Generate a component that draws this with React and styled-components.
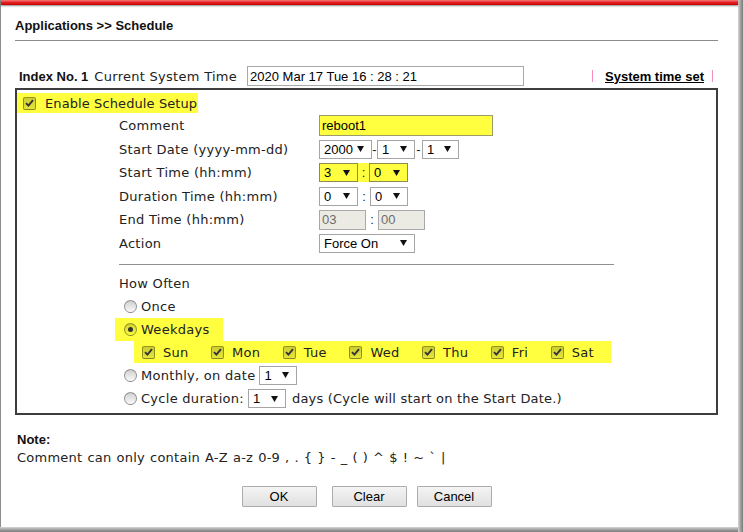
import React from 'react';
import styled, { createGlobalStyle } from 'styled-components';

const ARIAL = `"Liberation Sans", Arial, sans-serif`;
const VERDANA = `"DejaVu Sans", Verdana, sans-serif`;
const YELLOW = '#ffff40';
const VSPACE = '0.28px';

const GlobalStyle = createGlobalStyle`
  html, body { margin: 0; padding: 0; background: #fff; }
  body { font-family: ${VERDANA}; font-size: 13px; color: #222; }
  * { box-sizing: border-box; }
`;

const Window = styled.div`
  width: 743px;
  height: 532px;
  display: flex;
  padding: 0 5px 5px 0;
  background:
    linear-gradient(to right, #d8d8d8, #a2a2a2 50%, #7a7a7a) right top / 5px 100% no-repeat,
    linear-gradient(to bottom, #d8d8d8, #a2a2a2 50%, #7a7a7a) left bottom / 100% 5px no-repeat,
    #fff;
`;

const Panel = styled.div`
  flex: 1;
  display: flex;
  flex-direction: column;
  background: #fff;
  border-left: 1px solid #8c8c8c;
`;

const RedBar = styled.div`
  height: 5px;
  flex-shrink: 0;
  background: linear-gradient(#f47c7c, #e82424 45%, #c40000);
  box-shadow: 0 1px 2px rgba(0, 0, 0, 0.45);
`;

const Content = styled.div`
  display: flex;
  flex-direction: column;
  padding: 13px 20px 0 14px;
`;

const Title = styled.div`
  font-family: ${ARIAL};
  font-weight: bold;
  font-size: 13px;
  line-height: 15px;
  color: #111;
`;

const Rule = styled.div`
  margin-top: 7px;
  border-top: 1px solid #8c8c8c;
`;

const IndexRow = styled.div`
  margin-top: 25px;
  height: 20px;
  display: flex;
  align-items: center;
  padding: 0 5px 0 4px;
`;

const Bold = styled.span`
  font-family: ${ARIAL};
  font-weight: bold;
  font-size: 13px;
  color: #111;
`;

const PlainText = styled.span`
  font-family: ${VERDANA};
  font-size: 13px;
  letter-spacing: ${p => p.$ls || VSPACE};
  color: #222;
  white-space: nowrap;
  margin-left: ${p => p.$ml || 0}px;
`;

const TextBox = styled.input`
  font-family: ${ARIAL};
  font-size: 13px;
  color: ${p => (p.disabled ? '#6d6d6d' : '#000')};
  width: ${p => p.$w}px;
  height: ${p => p.$h || 20}px;
  margin: 0 0 0 ${p => p.$ml || 0}px;
  padding: 0 2px;
  border: 1px solid ${p => (p.$yellow ? '#9c9c6a' : '#a9a9a9')};
  background: ${p => (p.$yellow ? YELLOW : p.disabled ? '#ebebe4' : '#fff')};
  outline: none;
`;

const LinkGroup = styled.div`
  margin-left: auto;
  display: flex;
  align-items: center;
`;

const Pipe = styled.span`
  width: 1px;
  height: 12px;
  background: #f78fc0;
  margin: 0 ${p => p.$mr || 0}px 0 ${p => p.$ml || 0}px;
`;

const SysLink = styled.a`
  font-family: ${ARIAL};
  font-weight: bold;
  font-size: 13px;
  color: #000;
  text-decoration: underline;
`;

const MainBox = styled.div`
  margin-top: 2px;
  border: 2px solid #3d3d3d;
  padding: 3px 0 2px 0;
  display: flex;
  flex-direction: column;
`;

const EnableBar = styled.div`
  align-self: flex-start;
  display: flex;
  align-items: center;
  height: 20px;
  padding: 0 1px 0 6px;
  background: ${YELLOW};
`;

const CheckBox = styled.span`
  display: inline-flex;
  align-items: center;
  justify-content: center;
  width: 13px;
  height: 13px;
  flex-shrink: 0;
  border: 1px solid rgba(70, 70, 0, 0.5);
  border-radius: 2px;
  background: linear-gradient(rgba(0, 0, 0, 0.2), rgba(0, 0, 0, 0.1));
  margin-right: ${p => p.$mr || 8}px;
`;

const Check = ({ mr }) => (
  <CheckBox $mr={mr}>
    <svg width="9" height="8" viewBox="0 0 9 8">
      <path d="M1 4.2 L3.4 6.6 L8 1.2" stroke="#333" strokeWidth="1.9" fill="none" />
    </svg>
  </CheckBox>
);

const FormGrid = styled.div`
  margin-top: 0.7px;
  padding-left: 102px;
  display: grid;
  grid-template-columns: 200px auto;
  grid-auto-rows: 23.6px;
  align-items: center;
`;

const Label = styled.span`
  font-family: ${VERDANA};
  font-size: 13px;
  letter-spacing: ${p => p.$ls || VSPACE};
  color: #222;
  white-space: nowrap;
`;

const Controls = styled.div`
  display: flex;
  align-items: center;
`;

const SelectBox = styled.span`
  display: inline-flex;
  align-items: center;
  justify-content: space-between;
  width: ${p => p.$w}px;
  height: 19px;
  margin-left: ${p => p.$ml || 0}px;
  padding: 0 7px 0 4px;
  border: 1px solid ${p => (p.$onYellow ? '#8c8c50' : '#a5a5a5')};
  background: ${p => (p.$onYellow ? 'transparent' : '#fff')};
  font-family: ${ARIAL};
  font-size: 13px;
  color: #000;
  flex-shrink: 0;
`;

const Select = ({ value, w, ml, onYellow }) => (
  <SelectBox $w={w} $ml={ml} $onYellow={onYellow}>
    <span>{value}</span>
    <svg width="7" height="6" viewBox="0 0 7 6">
      <polygon points="0,0 7,0 3.5,6" fill="#111" />
    </svg>
  </SelectBox>
);

const Sep = styled.span`
  font-family: ${ARIAL};
  font-size: 13px;
  color: #222;
  width: ${p => p.$w}px;
  text-align: center;
  flex-shrink: 0;
`;

const TimeHighlight = styled.div`
  display: flex;
  align-items: center;
  background: ${YELLOW};
`;

const Divider = styled.div`
  margin: 8.7px 0 0 102px;
  width: 495px;
  border-top: 1px solid #8f8f8f;
`;

const Often = styled.div`
  margin-top: 7px;
  padding-left: 102px;
  display: flex;
  flex-direction: column;
`;

const OftenRow = styled.div`
  height: ${p => p.$h || 23}px;
  display: flex;
  align-items: center;
`;

const RadioDot = styled.span`
  width: 13px;
  height: 13px;
  flex-shrink: 0;
  border-radius: 50%;
  border: 1px solid rgba(0, 0, 0, 0.38);
  background: linear-gradient(rgba(0, 0, 0, 0.18), rgba(0, 0, 0, 0.02));
  display: inline-flex;
  align-items: center;
  justify-content: center;
  margin: 0 4px 0 5px;
  &::after {
    content: '';
    width: 5px;
    height: 5px;
    border-radius: 50%;
    background: #333;
    display: ${p => (p.$on ? 'block' : 'none')};
  }
`;

const WeekdaysBar = styled.div`
  height: 23px;
  width: 108px;
  margin-left: -4px;
  padding-left: 4px;
  display: flex;
  align-items: center;
  background: ${YELLOW};
`;

const DaysBar = styled.div`
  height: 22px;
  width: 477px;
  margin-left: 15px;
  padding-left: 8px;
  display: flex;
  align-items: center;
  background: ${YELLOW};
`;

const Day = styled.span`
  display: inline-flex;
  align-items: center;
  margin-right: 22.5px;
  font-family: ${VERDANA};
  font-size: 13px;
  letter-spacing: ${VSPACE};
  color: #222;
`;

const NoteTitle = styled.div`
  margin-top: 17px;
  padding-left: 2px;
  font-family: ${ARIAL};
  font-weight: bold;
  font-size: 13px;
  line-height: 16px;
  color: #111;
`;

const NoteText = styled.div`
  padding-left: 2px;
  font-family: ${VERDANA};
  font-size: 13px;
  line-height: 19px;
  letter-spacing: 0.25px;
  word-spacing: 0.6px;
  color: #222;
`;

const ButtonRow = styled.div`
  margin-top: 19px;
  display: flex;
  justify-content: center;
`;

const Button = styled.button`
  width: 75px;
  height: 21px;
  margin: 0 ${p => p.$mr || 0}px 0 0;
  padding: 0;
  border: 1px solid #acacac;
  border-radius: 1px;
  background: linear-gradient(#f4f4f4, #e0e0e0);
  font-family: ${ARIAL};
  font-size: 13px;
  color: #000;
`;

const days = ['Sun', 'Mon', 'Tue', 'Wed', 'Thu', 'Fri', 'Sat'];

export default function App() {
  return (
    <>
      <GlobalStyle />
      <Window>
        <Panel>
          <RedBar />
          <Content>
            <Title>Applications &gt;&gt; Schedule</Title>
            <Rule />
            <IndexRow>
              <Bold>Index No. 1</Bold>
              <PlainText $ml={6}>Current System Time</PlainText>
              <TextBox $w={277} $ml={10} readOnly defaultValue="2020 Mar 17 Tue 16 : 28 : 21" />
              <LinkGroup>
                <Pipe $mr={12} />
                <SysLink href="#">System time set</SysLink>
                <Pipe $ml={8} />
              </LinkGroup>
            </IndexRow>
            <MainBox>
              <EnableBar>
                <Check mr={9} />
                <Label $ls="0.1px">Enable Schedule Setup</Label>
              </EnableBar>
              <FormGrid>
                <Label>Comment</Label>
                <Controls>
                  <TextBox $w={174} $h={21} $yellow readOnly defaultValue="reboot1" />
                </Controls>

                <Label>Start Date (yyyy-mm-dd)</Label>
                <Controls>
                  <Select value="2000" w={53} />
                  <Sep $w={5}>-</Sep>
                  <Select value="1" w={38} />
                  <Sep $w={7}>-</Sep>
                  <Select value="1" w={37} />
                </Controls>

                <Label>Start Time (hh:mm)</Label>
                <Controls>
                  <TimeHighlight>
                    <Select value="3" w={39} onYellow />
                    <Sep $w={11}>:</Sep>
                    <Select value="0" w={39} onYellow />
                  </TimeHighlight>
                </Controls>

                <Label>Duration Time (hh:mm)</Label>
                <Controls>
                  <Select value="0" w={39} />
                  <Sep $w={12}>:</Sep>
                  <Select value="0" w={38} />
                </Controls>

                <Label>End Time (hh:mm)</Label>
                <Controls>
                  <TextBox $w={47} disabled defaultValue="03" />
                  <Sep $w={12}>:</Sep>
                  <TextBox $w={47} disabled defaultValue="00" />
                </Controls>

                <Label>Action</Label>
                <Controls>
                  <Select value="Force On" w={96} />
                </Controls>
              </FormGrid>
              <Divider />
              <Often>
                <OftenRow>
                  <Label>How Often</Label>
                </OftenRow>
                <OftenRow>
                  <RadioDot />
                  <Label>Once</Label>
                </OftenRow>
                <OftenRow>
                  <WeekdaysBar>
                    <RadioDot $on />
                    <Label>Weekdays</Label>
                  </WeekdaysBar>
                </OftenRow>
                <OftenRow>
                  <DaysBar>
                    {days.map(d => (
                      <Day key={d}>
                        <Check />
                        {d}
                      </Day>
                    ))}
                  </DaysBar>
                </OftenRow>
                <OftenRow>
                  <RadioDot />
                  <Label>Monthly, on date</Label>
                  <Select value="1" w={38} ml={4} />
                </OftenRow>
                <OftenRow $h={24}>
                  <RadioDot />
                  <Label>Cycle duration:</Label>
                  <Select value="1" w={38} ml={4} />
                  <PlainText $ml={6} $ls="0.2px">days (Cycle will start on the Start Date.)</PlainText>
                </OftenRow>
              </Often>
            </MainBox>
            <NoteTitle>Note:</NoteTitle>
            <NoteText>Comment can only contain A-Z a-z 0-9 , . {'{'} {'}'} - _ ( ) ^ $ ! ~ ` |</NoteText>
            <ButtonRow>
              <Button $mr={15}>OK</Button>
              <Button $mr={10}>Clear</Button>
              <Button>Cancel</Button>
            </ButtonRow>
          </Content>
        </Panel>
      </Window>
    </>
  );
}
